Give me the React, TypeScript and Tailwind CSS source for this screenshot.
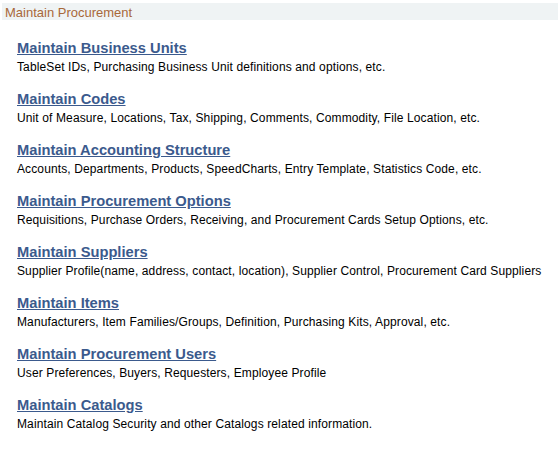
import React from 'react';

const items = [
  { title: 'Maintain Business Units', desc: 'TableSet IDs, Purchasing Business Unit definitions and options, etc.' },
  { title: 'Maintain Codes', desc: 'Unit of Measure, Locations, Tax, Shipping, Comments, Commodity, File Location, etc.' },
  { title: 'Maintain Accounting Structure', desc: 'Accounts, Departments, Products, SpeedCharts, Entry Template, Statistics Code, etc.' },
  { title: 'Maintain Procurement Options', desc: 'Requisitions, Purchase Orders, Receiving, and Procurement Cards Setup Options, etc.' },
  { title: 'Maintain Suppliers', desc: 'Supplier Profile(name, address, contact, location), Supplier Control, Procurement Card Suppliers' },
  { title: 'Maintain Items', desc: 'Manufacturers, Item Families/Groups, Definition, Purchasing Kits, Approval, etc.' },
  { title: 'Maintain Procurement Users', desc: 'User Preferences, Buyers, Requesters, Employee Profile' },
  { title: 'Maintain Catalogs', desc: 'Maintain Catalog Security and other Catalogs related information.' },
];

const App = () => {
  return (
    <div className="w-[558px] h-[465px] bg-white overflow-hidden" style={{ fontFamily: '"Liberation Sans", Arial, sans-serif' }}>
      <div className="mt-[3px] ml-[2px] h-[17px] bg-[#eff3f4] pl-[3px] text-[13px] leading-[19px] text-[#a8683a]">
        Maintain Procurement
      </div>

      <div className="pl-[17px] pt-[19px] flex flex-col gap-[15px]">
        {items.map((item, index) => (
          <div key={index} className="flex flex-col">
            <a href="#" className="text-[14.7px] leading-[18px] font-bold text-[#3b5a8d] underline self-start">
              {item.title}
            </a>
            <span className="mt-[3px] text-[12px] leading-[15px] tracking-[0.12px] text-black whitespace-nowrap">
              {item.desc}
            </span>
          </div>
        ))}
      </div>
    </div>
  );
};

export default App;
